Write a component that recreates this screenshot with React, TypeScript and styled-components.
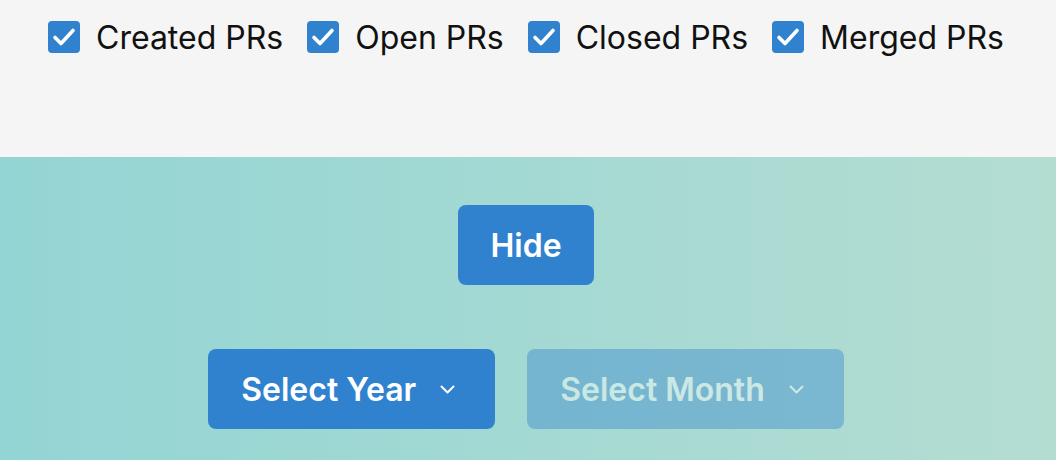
import styled, { createGlobalStyle } from "styled-components"

const GlobalStyle = createGlobalStyle`
  html, body {
    margin: 0;
    padding: 0;
    font-family: Inter, "Noto Sans", sans-serif;
    background: #f5f5f5;
  }
`

const Page = styled.div`
  min-height: 460px;
  display: flex;
  flex-direction: column;
`

const FilterBar = styled.div`
  height: 157px;
  box-sizing: border-box;
  padding-top: 21px;
  padding-right: 4px;
  background: #f5f5f5;
  display: flex;
  justify-content: center;
  align-items: flex-start;
  gap: 24px;
`

const FilterLabel = styled.label`
  display: flex;
  align-items: center;
  gap: 16px;
  height: 32px;
  font-size: 32px;
  color: #111;
  cursor: pointer;
`

const Box = styled.span`
  width: 32px;
  height: 32px;
  border-radius: 4px;
  background: #3182ce;
  display: flex;
  align-items: center;
  justify-content: center;
  flex-shrink: 0;
`

const Controls = styled.div`
  flex: 1;
  background: linear-gradient(to right, #93d5d4 0%, #b4ddd2 100%);
  display: flex;
  flex-direction: column;
  align-items: center;
  padding-top: 48px;
  padding-right: 4px;
  gap: 64px;
`

const Button = styled.button`
  height: 80px;
  padding: 0 32px;
  border: none;
  border-radius: 8px;
  background: #3182ce;
  color: #fff;
  font-family: Inter, "Noto Sans", sans-serif;
  font-size: 32px;
  font-weight: 600;
  cursor: pointer;
`

const SelectRow = styled.div`
  display: flex;
  gap: 32px;
`

const SelectButton = styled.button<{ $disabled?: boolean }>`
  height: 80px;
  padding: 0 40px 0 33px;
  border: none;
  border-radius: 8px;
  background: #3182ce;
  color: #fff;
  font-family: Inter, "Noto Sans", sans-serif;
  font-size: 32px;
  font-weight: 600;
  display: flex;
  align-items: center;
  gap: 24px;
  opacity: ${(p) => (p.$disabled ? 0.4 : 1)};
  cursor: ${(p) => (p.$disabled ? "not-allowed" : "pointer")};
`

const Check = () => (
  <svg width="24" height="20" viewBox="0 0 24 20" fill="none">
    <path d="M3 10.5 L9 16.5 L21 3.5" stroke="#fff" strokeWidth="3.6" strokeLinecap="round" strokeLinejoin="round" />
  </svg>
)

const Chevron = () => (
  <svg width="15" height="9" viewBox="0 0 15 9" fill="none">
    <path d="M1.5 1.5 L7.5 7.5 L13.5 1.5" stroke="currentColor" strokeWidth="2" strokeLinecap="round" strokeLinejoin="round" />
  </svg>
)

const filters = ["Created PRs", "Open PRs", "Closed PRs", "Merged PRs"]

export default function App() {
  return (
    <>
      <GlobalStyle />
      <Page>
        <FilterBar>
          {filters.map((f) => (
            <FilterLabel key={f}>
              <Box>
                <Check />
              </Box>
              {f}
            </FilterLabel>
          ))}
        </FilterBar>
        <Controls>
          <Button>Hide</Button>
          <SelectRow>
            <SelectButton>
              Select Year
              <Chevron />
            </SelectButton>
            <SelectButton $disabled disabled>
              Select Month
              <Chevron />
            </SelectButton>
          </SelectRow>
        </Controls>
      </Page>
    </>
  )
}
